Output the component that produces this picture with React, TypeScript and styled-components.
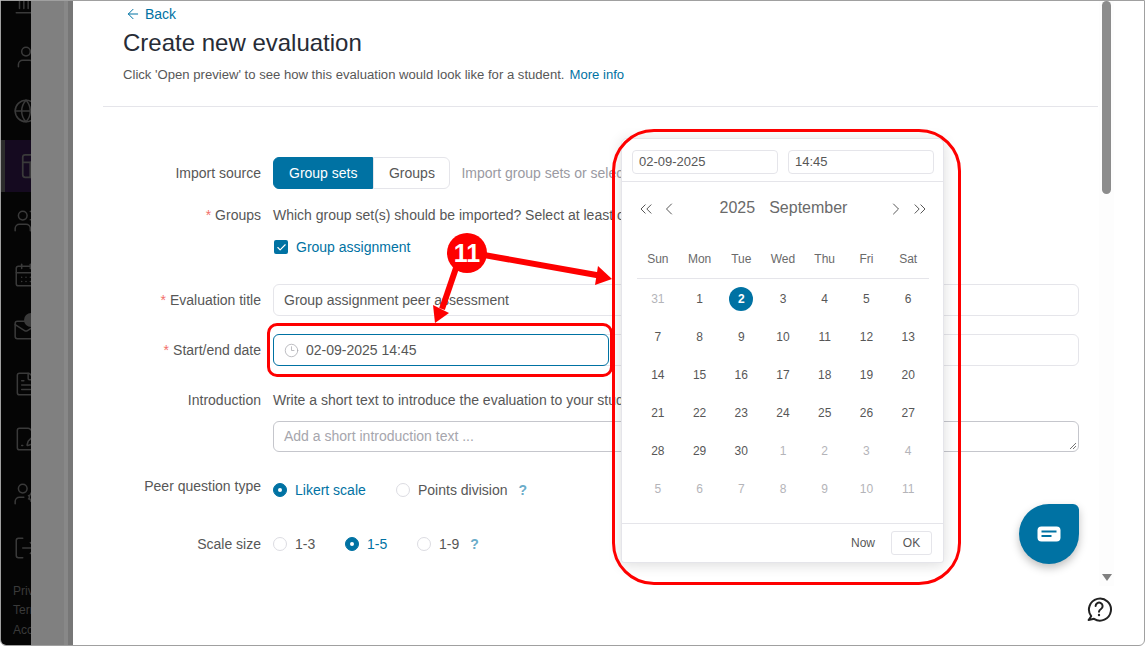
import React from 'react'
import styled, { createGlobalStyle } from 'styled-components'
import {
  ArrowLeft,
  Check,
  ChevronLeft,
  ChevronRight,
  ChevronsLeft,
  ChevronsRight,
  Clock3,
  FilePenLine,
  FileText,
  Globe,
  Landmark,
  LogOut,
  Mail,
  PanelsTopLeft,
  CalendarDays,
  User,
  UserCog,
  Users,
} from 'lucide-react'

const GlobalStyle = createGlobalStyle`
  html, body {
    margin: 0;
    padding: 0;
    background: #fff;
  }
  * {
    box-sizing: border-box;
  }
  body {
    font-family: "Liberation Sans", Arial, sans-serif;
    font-size: 14px;
    color: #575757;
  }
`

const Frame = styled.div`
  position: relative;
  width: 1145px;
  height: 646px;
  display: flex;
  overflow: hidden;
  background: #fff;
  border: 1px solid #a0a0a0;
  border-radius: 0 0 6px 6px;
`

const Sidebar = styled.nav`
  width: 30px;
  height: 100%;
  flex: none;
  background: #050505;
  overflow: hidden;
  color: #3a3a3a;
  display: flex;
  flex-direction: column;
`

const NavItem = styled.div<{ $active?: boolean; $badge?: boolean }>`
  position: relative;
  height: 52px;
  margin-bottom: 2.6px;
  flex: none;
  padding-left: ${(p) => (p.$active ? '14px' : '12px')};
  display: flex;
  align-items: center;
  background: ${(p) => (p.$active ? '#150a20' : 'transparent')};
  border-left: ${(p) => (p.$active ? '4px solid #2c2c2c' : 'none')};
  svg {
    flex: none;
  }
  &::after {
    content: '';
    display: ${(p) => (p.$badge ? 'block' : 'none')};
    position: absolute;
    left: 23px;
    top: 9px;
    width: 14px;
    height: 14px;
    border-radius: 50%;
    background: #3a3a3a;
  }
`

const NavStack = styled.div`
  margin-top: -24.8px;
`

const FooterLinks = styled.div`
  margin-top: 5px;
  padding-left: 12px;
  font-size: 12px;
  line-height: 19.5px;
  white-space: nowrap;
  color: #3a3a3a;
`

const Shade = styled.div`
  width: 42px;
  height: 100%;
  flex: none;
  background: linear-gradient(90deg, #808080 0 33px, #888 33px 37px, #777 37px);
`

const Main = styled.main`
  width: 1026px;
  flex: none;
  height: 100%;
  padding-left: 30px;
  overflow: hidden;
`

const Header = styled.header`
  width: 995px;
  height: 106px;
  padding: 5px 0 0 20px;
  border-bottom: 1px solid #e5e5ea;
`

const BackLink = styled.a`
  display: flex;
  align-items: center;
  gap: 4px;
  height: 16px;
  margin-left: 2px;
  color: #0072a3;
  font-size: 14px;
`

const Title = styled.h1`
  margin: 4px 0 0;
  font-size: 24px;
  line-height: 34px;
  font-weight: 400;
  color: #272c36;
`

const Subtitle = styled.p`
  margin: 7px 0 0;
  font-size: 13.12px;
  line-height: 16px;
  color: #575757;
`

const InfoLink = styled.a`
  margin-left: 5px;
  color: #0072a3;
`

const Form = styled.div`
  width: 976px;
  padding-top: 50px;
`

const Row = styled.div<{ $top?: number }>`
  display: grid;
  grid-template-columns: 158px 806px;
  column-gap: 12px;
  margin-top: ${(p) => p.$top ?? 0}px;
`

const Label = styled.label<{ $top?: number }>`
  text-align: right;
  line-height: 32px;
  margin-top: ${(p) => p.$top ?? 0}px;
  white-space: nowrap;
`

const Required = styled.span`
  color: #f2706a;
  margin-right: 4px;
`

const Inline = styled.div`
  display: flex;
  align-items: center;
  min-height: 32px;
  white-space: nowrap;
`

const SegmentButton = styled.button<{ $active?: boolean }>`
  height: 32px;
  padding: 0 ${(p) => (p.$active ? '15px' : '14.5px')};
  font: inherit;
  color: ${(p) => (p.$active ? '#fff' : '#575757')};
  background: ${(p) => (p.$active ? '#0072a3' : '#fff')};
  border: 1px solid ${(p) => (p.$active ? '#0072a3' : '#e5e5ea')};
  border-radius: ${(p) => (p.$active ? '6px 0 0 6px' : '0 6px 6px 0')};
`

const Hint = styled.span`
  margin-left: 11px;
  color: #9a9aa2;
`

const CheckBox = styled.span`
  width: 14px;
  height: 14px;
  margin: 0 8px 0 1px;
  border-radius: 2px;
  background: #0072a3;
  color: #fff;
  display: inline-flex;
  align-items: center;
  justify-content: center;
`

const LinkText = styled.span`
  color: #0072a3;
`

const TextField = styled.div`
  height: 32px;
  padding: 0 10px;
  display: flex;
  align-items: center;
  border: 1px solid #e5e5ea;
  border-radius: 6px;
  color: #575757;
  background: #fff;
`

const DateTrack = styled.div`
  position: relative;
  height: 32px;
  border: 1px solid #e5e5ea;
  border-radius: 6px;
`

const DateField = styled.div`
  position: absolute;
  left: -1px;
  top: -1px;
  width: 336px;
  height: 32px;
  padding-left: 10px;
  display: flex;
  align-items: center;
  gap: 7px;
  color: #575757;
  background: #fff;
  border: 1px solid #0072a3;
  border-radius: 6px;
  svg {
    color: #a8a8ae;
  }
`

const IntroArea = styled.div`
  position: relative;
  height: 31px;
  margin-top: 5px;
  padding: 0 10px 2px;
  display: flex;
  align-items: center;
  border: 1px solid #c5c6cc;
  border-radius: 6px;
  color: #a6a6ad;
`

const Grip = styled.svg`
  position: absolute;
  right: 1px;
  bottom: 1px;
`

const RadioOption = styled.span<{ $width: number; $checked?: boolean }>`
  width: ${(p) => p.$width}px;
  display: inline-flex;
  align-items: center;
  gap: 8px;
  color: ${(p) => (p.$checked ? '#0072a3' : '#575757')};
`

const RadioDot = styled.span<{ $checked?: boolean }>`
  width: 14px;
  height: 14px;
  flex: none;
  border-radius: 50%;
  background: ${(p) => (p.$checked ? '#0072a3' : '#fff')};
  border: 1px solid ${(p) => (p.$checked ? '#0072a3' : '#dcdce2')};
  display: inline-flex;
  align-items: center;
  justify-content: center;
  &::after {
    content: '';
    display: ${(p) => (p.$checked ? 'block' : 'none')};
    width: 4px;
    height: 4px;
    border-radius: 50%;
    background: #fff;
  }
`

const Question = styled.span`
  margin-left: 3px;
  color: #6bacc9;
  font-weight: 700;
  font-size: 14px;
`

const ScrollTrack = styled.aside`
  width: 15px;
  height: 585px;
  flex: none;
  position: relative;
  background: #fdfdfd;
  padding: 0 3px;
`

const ScrollThumb = styled.div`
  width: 9px;
  height: 193px;
  border-radius: 5px;
  background: #8c8c8c;
`

const ScrollArrow = styled.span`
  position: absolute;
  left: 3px;
  top: 573px;
  width: 0;
  height: 0;
  border-left: 5px solid transparent;
  border-right: 5px solid transparent;
  border-top: 7px solid #808080;
`

const Picker = styled.div`
  position: absolute;
  left: 620px;
  top: 137px;
  width: 323px;
  height: 425px;
  background: #fff;
  border: 1px solid #e5e5ea;
  border-radius: 6px 6px 3px 3px;
  box-shadow: 0 2px 14px rgba(0, 0, 0, 0.14);
  display: flex;
  flex-direction: column;
`

const PickerInputs = styled.div`
  height: 43px;
  flex: none;
  padding: 11px 10px 0;
  display: grid;
  grid-template-columns: 146px 146px;
  column-gap: 10px;
  border-bottom: 1px solid #e5e5ea;
`

const PickerInput = styled.div`
  height: 24px;
  padding: 0 6px;
  font-size: 13px;
  line-height: 22px;
  border: 1px solid #e5e5ea;
  border-radius: 4px;
`

const PickerHeader = styled.div`
  height: 51px;
  flex: none;
  display: flex;
  align-items: center;
  padding: 2px 16px 0 17px;
  color: #575757;
  svg {
    flex: none;
    margin: 0 -3px;
  }
`

const HeaderTitle = styled.div`
  flex: 1;
  display: flex;
  justify-content: center;
  gap: 14px;
  font-size: 16px;
  color: #6a6a6a;
  margin: -2px 0 0 2px;
`

const HeaderGap = styled.span<{ $w: number }>`
  width: ${(p) => p.$w}px;
  flex: none;
`

const WeekHeader = styled.div`
  margin: 0 14px 0 15px;
  height: 46px;
  padding-top: 7px;
  display: grid;
  grid-template-columns: repeat(7, 1fr);
  align-items: center;
  text-align: center;
  font-size: 12px;
  color: #6a6a6a;
  border-bottom: 1px solid #e5e5ea;
`

const DayGrid = styled.div`
  margin: 0 14px 0 15px;
  padding-top: 1px;
  display: grid;
  grid-template-columns: repeat(7, 1fr);
  grid-auto-rows: 38px;
  flex: none;
  align-items: center;
  justify-items: center;
  font-size: 12px;
`

const Day = styled.span<{ $muted?: boolean; $selected?: boolean }>`
  width: 24px;
  height: 24px;
  line-height: 24px;
  text-align: center;
  border-radius: 50%;
  color: ${(p) => (p.$selected ? '#fff' : p.$muted ? '#b4b4b9' : '#575757')};
  background: ${(p) => (p.$selected ? '#0072a3' : 'transparent')};
  font-weight: ${(p) => (p.$selected ? 700 : 400)};
`

const PickerFooter = styled.div`
  margin-top: auto;
  height: 39px;
  flex: none;
  padding: 7px 11px 0 0;
  display: flex;
  justify-content: flex-end;
  align-items: flex-start;
  gap: 16px;
  border-top: 1px solid #e5e5ea;
  font-size: 12px;
`

const NowLink = styled.span`
  line-height: 24px;
`

const OkButton = styled.button`
  width: 41px;
  height: 24px;
  padding: 0;
  font: inherit;
  color: #575757;
  background: #fff;
  border: 1px solid #e5e5ea;
  border-radius: 3px;
`

const ChatButton = styled.div`
  position: absolute;
  left: 1018px;
  top: 503px;
  width: 60px;
  height: 60px;
  display: flex;
  align-items: center;
  justify-content: center;
  background: #0072a3;
  border-radius: 50% 6px 50% 50%;
  box-shadow: 0 4px 8px rgba(0, 0, 0, 0.25);
`

const HelpIcon = styled.svg`
  position: absolute;
  left: 1085px;
  top: 595px;
`

const Highlight = styled.div<{ $x: number; $y: number; $w: number; $h: number; $r: number }>`
  position: absolute;
  left: ${(p) => p.$x}px;
  top: ${(p) => p.$y}px;
  width: ${(p) => p.$w}px;
  height: ${(p) => p.$h}px;
  border: 3px solid #fe0000;
  border-radius: ${(p) => p.$r}px;
  pointer-events: none;
`

const ArrowLayer = styled.svg`
  position: absolute;
  left: -1px;
  top: -1px;
  pointer-events: none;
`

const Badge = styled.div`
  position: absolute;
  left: 446px;
  top: 232px;
  width: 40px;
  height: 40px;
  border-radius: 50%;
  background: #fe0000;
  color: #fff;
  font-size: 25px;
  font-weight: 700;
  line-height: 41px;
  text-align: center;
`

const navIcons = [Landmark, User, Globe, PanelsTopLeft, Users, CalendarDays, Mail, FileText, FilePenLine, UserCog, LogOut]

const days: { d: number; muted?: boolean; selected?: boolean }[] = [
  { d: 31, muted: true },
  ...Array.from({ length: 30 }, (_, i) => ({ d: i + 1, selected: i === 1 })),
  ...Array.from({ length: 11 }, (_, i) => ({ d: i + 1, muted: true })),
]

const App = () => {
  return (
    <>
      <GlobalStyle />
      <Frame>
        <Sidebar>
          <NavStack>
            {navIcons.map((Icon, i) => (
              <NavItem key={i} $active={i === 3} $badge={i === 6}>
                <Icon size={i === 3 ? 30 : 26} strokeWidth={1.4} />
              </NavItem>
            ))}
          </NavStack>
          <FooterLinks>
            Privacy
            <br />
            Terms
            <br />
            Accessibility
          </FooterLinks>
        </Sidebar>
        <Shade />
        <Main>
          <Header>
            <BackLink>
              <ArrowLeft size={16} strokeWidth={1.5} />
              Back
            </BackLink>
            <Title>Create new evaluation</Title>
            <Subtitle>
              Click 'Open preview' to see how this evaluation would look like for a student.
              <InfoLink>More info</InfoLink>
            </Subtitle>
          </Header>
          <Form>
            <Row>
              <Label>Import source</Label>
              <Inline>
                <SegmentButton $active>Group sets</SegmentButton>
                <SegmentButton>Groups</SegmentButton>
                <Hint>Import group sets or select individual groups</Hint>
              </Inline>
            </Row>
            <Row $top={10}>
              <Label>
                <Required>*</Required>Groups
              </Label>
              <Inline>Which group set(s) should be imported? Select at least one</Inline>
            </Row>
            <Row>
              <span />
              <Inline>
                <CheckBox>
                  <Check size={11} strokeWidth={2.5} />
                </CheckBox>
                <LinkText>Group assignment</LinkText>
              </Inline>
            </Row>
            <Row $top={21}>
              <Label>
                <Required>*</Required>Evaluation title
              </Label>
              <TextField>Group assignment peer assessment</TextField>
            </Row>
            <Row $top={18}>
              <Label>
                <Required>*</Required>Start/end date
              </Label>
              <DateTrack>
                <DateField>
                  <Clock3 size={15} strokeWidth={1.2} />
                  02-09-2025 14:45
                </DateField>
              </DateTrack>
            </Row>
            <Row $top={18}>
              <Label>Introduction</Label>
              <div>
                <Inline>Write a short text to introduce the evaluation to your students</Inline>
                <IntroArea>
                  Add a short introduction text ...
                  <Grip width="9" height="9" viewBox="0 0 9 9">
                    <path d="M8 2L2 8M8 5L5 8" stroke="#777" strokeWidth="1" />
                  </Grip>
                </IntroArea>
              </div>
            </Row>
            <Row $top={22}>
              <Label $top={-4}>Peer question type</Label>
              <Inline>
                <RadioOption $width={123} $checked>
                  <RadioDot $checked />
                  Likert scale
                </RadioOption>
                <RadioOption $width={140}>
                  <RadioDot />
                  Points division
                  <Question>?</Question>
                </RadioOption>
              </Inline>
            </Row>
            <Row $top={22}>
              <Label>Scale size</Label>
              <Inline>
                <RadioOption $width={72}>
                  <RadioDot />
                  1-3
                </RadioOption>
                <RadioOption $width={72} $checked>
                  <RadioDot $checked />
                  1-5
                </RadioOption>
                <RadioOption $width={72}>
                  <RadioDot />
                  1-9
                  <Question>?</Question>
                </RadioOption>
              </Inline>
            </Row>
          </Form>
        </Main>
        <ScrollTrack>
          <ScrollThumb />
          <ScrollArrow />
        </ScrollTrack>

        <Picker>
          <PickerInputs>
            <PickerInput>02-09-2025</PickerInput>
            <PickerInput>14:45</PickerInput>
          </PickerInputs>
          <PickerHeader>
            <ChevronsLeft size={20} strokeWidth={1.2} />
            <HeaderGap $w={9} />
            <ChevronLeft size={20} strokeWidth={1.2} />
            <HeaderTitle>
              <span>2025</span>
              <span>September</span>
            </HeaderTitle>
            <ChevronRight size={20} strokeWidth={1.2} />
            <HeaderGap $w={10} />
            <ChevronsRight size={20} strokeWidth={1.2} />
          </PickerHeader>
          <WeekHeader>
            {['Sun', 'Mon', 'Tue', 'Wed', 'Thu', 'Fri', 'Sat'].map((w) => (
              <span key={w}>{w}</span>
            ))}
          </WeekHeader>
          <DayGrid>
            {days.map((x, i) => (
              <Day key={i} $muted={x.muted} $selected={x.selected}>
                {x.d}
              </Day>
            ))}
          </DayGrid>
          <PickerFooter>
            <NowLink>Now</NowLink>
            <OkButton>OK</OkButton>
          </PickerFooter>
        </Picker>

        <ChatButton>
          <svg width="24" height="16" viewBox="0 0 24 16">
            <rect x="0.5" y="0.5" width="23" height="15" rx="4" fill="#fff" />
            <path d="M4.500 5.500h15M4.500 10h10" stroke="#0072a3" strokeWidth="1.800" />
          </svg>
        </ChatButton>
        <HelpIcon width="26" height="26" viewBox="0 0 26 26" fill="none">
          <path
            d="M5.200 20.200A11 11 0 1 1 8 22.800L2.600 24Z"
            stroke="#222"
            strokeWidth="2"
            strokeLinejoin="round"
          />
          <path
            d="M9.600 10a3.500 3.500 0 1 1 5.400 3c-1.200.8-2 1.400-2 2.800"
            stroke="#222"
            strokeWidth="2"
            strokeLinecap="round"
          />
          <circle cx="13" cy="19" r="1.200" fill="#222" />
        </HelpIcon>

        <Highlight $x={266} $y={322} $w={346} $h={54} $r={10} />
        <Highlight $x={611} $y={128} $w={349} $h={456} $r={42} />
        <ArrowLayer width="1145" height="646" viewBox="0 0 1145 646">
          <path d="M456 268L442 309" stroke="#fe0000" strokeWidth="6" />
          <path d="M435 323L433 305L449 313Z" fill="#fe0000" />
          <path d="M484 255L602 276" stroke="#fe0000" strokeWidth="6" />
          <path d="M612 279L598 266L595 285Z" fill="#fe0000" />
        </ArrowLayer>
        <Badge>11</Badge>
      </Frame>
    </>
  )
}

export default App
